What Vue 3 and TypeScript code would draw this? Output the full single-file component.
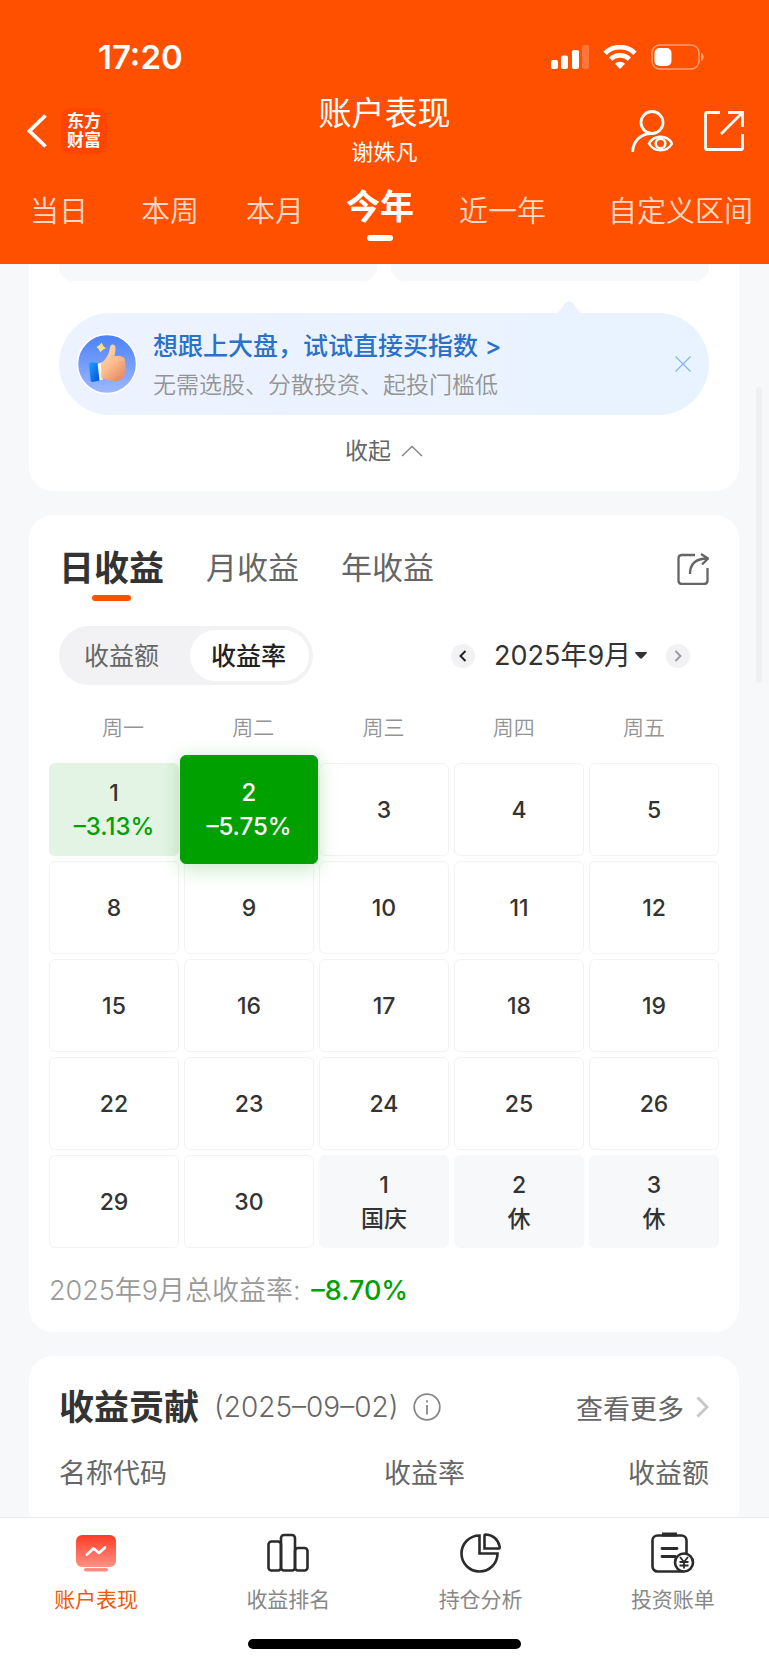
<script setup lang="ts">
import { ref } from 'vue'

interface Day {
  key: string
  label: string
  note?: string
  kind: 'plain' | 'loss' | 'selected' | 'rest'
}

const ranges: string[] = ['当日', '本周', '本月', '今年', '近一年', '自定义区间']
const activeRange = ref('今年')

const periods: string[] = ['日收益', '月收益', '年收益']
const activePeriod = ref('日收益')

const modes: string[] = ['收益额', '收益率']
const activeMode = ref('收益率')

const month = ref('2025年9月')
const weekdays: string[] = ['周一', '周二', '周三', '周四', '周五']

const plain = (n: number): Day => ({ key: `9-${n}`, label: String(n), kind: 'plain' })

const days: Day[] = [
  { key: '9-1', label: '1', note: '–3.13%', kind: 'loss' },
  { key: '9-2', label: '2', note: '–5.75%', kind: 'selected' },
  ...[3, 4, 5, 8, 9, 10, 11, 12, 15, 16, 17, 18, 19, 22, 23, 24, 25, 26, 29, 30].map(plain),
  { key: '10-1', label: '1', note: '国庆', kind: 'rest' },
  { key: '10-2', label: '2', note: '休', kind: 'rest' },
  { key: '10-3', label: '3', note: '休', kind: 'rest' },
]

const navItems: string[] = ['账户表现', '收益排名', '持仓分析', '投资账单']
const activeNav = ref('账户表现')
</script>

<template>
  <div class="app">
    <header class="header">
      <div class="status">
        <span class="clock">17:20</span>
        <div class="status-icons">
          <svg width="38" height="24" viewBox="0 0 38 24" fill="#fff">
            <rect x="0" y="15" width="7" height="9" rx="2" />
            <rect x="10" y="10.500" width="7" height="13.500" rx="2" />
            <rect x="21" y="5" width="7" height="19" rx="2" />
            <rect x="31" y="0" width="7" height="24" rx="2" opacity=".22" />
          </svg>
          <svg width="34" height="24" viewBox="0 0 34 24" fill="none" stroke="#fff">
            <path d="M2 8.300 A21.500 21.500 0 0 1 32 8.300" stroke-width="4.800" />
            <path d="M7.600 14.200 A13.500 13.500 0 0 1 26.400 14.200" stroke-width="4.600" />
            <path d="M17 24 L11.900 18.800 A7.300 7.300 0 0 1 22.100 18.800Z" fill="#fff" stroke="none" />
          </svg>
          <svg width="54" height="26" viewBox="0 0 54 26">
            <rect x="1" y="1" width="47" height="24" rx="8" fill="none" stroke="#fff" stroke-opacity=".45" stroke-width="1.500" />
            <rect x="3.500" y="4" width="17" height="18" rx="5" fill="#fff" />
            <path d="M50 9 C53.500 10 53.500 16 50 17Z" fill="#fff" fill-opacity=".5" />
          </svg>
        </div>
      </div>

      <div class="navbar">
        <div class="nav-left">
          <button class="icon-btn" aria-label="返回">
            <svg width="20" height="34" viewBox="0 0 20 34" fill="none" stroke="#fff" stroke-width="3.800">
              <path d="M18.500 1.500 L2.500 17 L18.500 32.500" />
            </svg>
          </button>
          <div class="brand"><span>东方</span><span>财富</span></div>
        </div>
        <div class="nav-title">
          <h1>账户表现</h1>
          <p>谢姝凡</p>
        </div>
        <div class="nav-right">
          <button class="icon-btn" aria-label="查看账户">
            <svg width="42" height="42" viewBox="0 0 42 42" fill="none" stroke="#fff" stroke-width="2.800">
              <circle cx="21" cy="12.500" r="11" />
              <path d="M1.600 42 C2 31.500 9.500 23.500 20.500 23.500" />
              <path d="M18 33.500 C23 24.500 36 24.500 41 33.500 C36 42.500 23 42.500 18 33.500Z" stroke-width="2.500" />
              <circle cx="29.500" cy="33.500" r="4.800" stroke-width="2.500" />
            </svg>
          </button>
          <button class="icon-btn" aria-label="分享">
            <svg width="40" height="40" viewBox="0 0 40 40" fill="none" stroke="#fff" stroke-width="2.800">
              <path d="M16 1.500 H3 Q1.500 1.500 1.500 3 V37 Q1.500 38.500 3 38.500 H37 Q38.500 38.500 38.500 37 V23" />
              <path d="M24 1.500 H38.500 V16 M38 2 L17 23" />
            </svg>
          </button>
        </div>
      </div>

      <nav class="ranges">
        <button
          v-for="item in ranges"
          :key="item"
          class="range"
          :class="{ active: item === activeRange }"
          @click="activeRange = item"
        >{{ item }}</button>
      </nav>
    </header>

    <main class="content">
      <div class="scrollbar"></div>

      <section class="card card-top">
        <div class="tiles">
          <div class="tile"></div>
          <div class="tile"></div>
        </div>
        <div class="promo">
          <svg class="promo-tip" width="26" height="14" viewBox="0 0 26 14">
            <path d="M0 14 C5 11 8 1 13 1 C18 1 21 11 26 14Z" fill="#ebf2ff" />
          </svg>
          <svg class="promo-icon" width="60" height="60" viewBox="0 0 60 60">
            <defs>
              <linearGradient id="disc" x1="0" y1="0" x2="0" y2="1">
                <stop offset="0" stop-color="#4a80f7" />
                <stop offset="1" stop-color="#9dbaff" />
              </linearGradient>
              <linearGradient id="skin" x1="0" y1="0" x2="0.600" y2="1">
                <stop offset="0" stop-color="#ffdcb4" />
                <stop offset=".6" stop-color="#fbbd8d" />
                <stop offset="1" stop-color="#e98f68" />
              </linearGradient>
              <linearGradient id="cuff" x1="0" y1="0" x2="1" y2="1">
                <stop offset="0" stop-color="#1fa2ff" />
                <stop offset="1" stop-color="#0450d8" />
              </linearGradient>
            </defs>
            <circle cx="30" cy="30" r="29.500" fill="url(#disc)" stroke="#fff" stroke-width="1.500" />
            <path d="M24.500 8.500 Q25.500 12 29 14.500 Q25.500 15 23.500 18.500 Q22.500 15 19.500 13 Q23 12 24.500 8.500Z" fill="#ffe27a" />
            <path d="M20 30 L26 28 L26 45.500 L21 46.500Z" fill="#f2f6ff" />
            <path d="M24 29 C29 26 32 20 33 13.500 C33.500 9.500 38 9.500 38.500 13.500 C39 17 37.500 20 37.500 22 C41 22 47.500 21.500 48 26 C49 31 48.500 37 47.500 41 C46 47 40 47.500 36 47 C31 46.500 28 45 24.500 44.500Z" fill="url(#skin)" />
            <path d="M41 28.500 Q45 28 48 29 M41.500 34.500 Q45 34 48.300 35 M41 40.500 Q45 40 47.500 41" fill="none" stroke="#ee9f74" stroke-width=".8" />
            <path d="M12 30.500 Q12 28.500 14 28.300 L20.500 29 L22.500 46.500 L15.500 48 Q14 48 13.700 46.500Z" fill="url(#cuff)" />
          </svg>
          <div class="promo-text">
            <a href="#" class="promo-link">想跟上大盘，试试直接买指数 &gt;</a>
            <p>无需选股、分散投资、起投门槛低</p>
          </div>
          <button class="icon-btn" aria-label="关闭">
            <svg width="16" height="16" viewBox="0 0 16 16" fill="none" stroke="#86b2e4" stroke-width="1.100">
              <path d="M.5 .5 L15.500 15.500 M15.500 .5 L.5 15.500" />
            </svg>
          </button>
        </div>
        <button class="collapse">
          收起
          <svg width="22" height="12" viewBox="0 0 22 12" fill="none" stroke="#888" stroke-width="1.600">
            <path d="M1 11 L11 1.500 L21 11" />
          </svg>
        </button>
      </section>

      <section class="card calendar">
        <div class="periods">
          <button
            v-for="item in periods"
            :key="item"
            class="period"
            :class="{ active: item === activePeriod }"
            @click="activePeriod = item"
          >{{ item }}</button>
          <button class="icon-btn share" aria-label="分享收益">
            <svg width="32" height="32" viewBox="0 0 32 32" fill="none" stroke="#666" stroke-width="2.300">
              <path d="M18 2 H5 Q1.500 2 1.500 5.500 V27.500 Q1.500 31 5 31 H27 Q30.500 31 30.500 27.500 V15" />
              <path d="M13 21 C13 11 19 5.500 30.500 5.500 M24 1 L31 5.500 L25 11.500" />
            </svg>
          </button>
        </div>

        <div class="controls">
          <div class="switch">
            <button
              v-for="item in modes"
              :key="item"
              class="mode"
              :class="{ active: item === activeMode }"
              @click="activeMode = item"
            >{{ item }}</button>
          </div>
          <div class="month">
            <button class="step" aria-label="上个月">
              <svg width="8" height="12" viewBox="0 0 8 12" fill="none" stroke="#222" stroke-width="2">
                <path d="M6.500 1 L1.500 6 L6.500 11" />
              </svg>
            </button>
            <label class="month-pick">
              <select v-model="month" aria-label="月份">
                <option>2025年8月</option>
                <option>2025年9月</option>
              </select>
              <svg width="12" height="7" viewBox="0 0 12 7" fill="#333">
                <path d="M1 0 H11 Q12.500 .5 11.500 1.500 L7 6.300 Q6 7 5 6.300 L.5 1.500 Q-.5 .5 1 0Z" />
              </svg>
            </label>
            <button class="step" aria-label="下个月">
              <svg width="8" height="12" viewBox="0 0 8 12" fill="none" stroke="#999" stroke-width="1.800">
                <path d="M1.500 1 L6.500 6 L1.500 11" />
              </svg>
            </button>
          </div>
        </div>

        <div class="weekdays">
          <span v-for="d in weekdays" :key="d">{{ d }}</span>
        </div>

        <div class="days">
          <button v-for="day in days" :key="day.key" class="day" :class="day.kind">
            <span>{{ day.label }}</span>
            <span v-if="day.note" class="note">{{ day.note }}</span>
          </button>
        </div>

        <p class="total">2025年9月总收益率: <strong>–8.70%</strong></p>
      </section>

      <section class="card contribution">
        <div class="contribution-head">
          <h2>收益贡献</h2>
          <span class="date">(2025–09–02)</span>
          <button class="icon-btn" aria-label="说明">
            <svg width="28" height="28" viewBox="0 0 28 28" fill="none" stroke="#888" stroke-width="1.800">
              <circle cx="14" cy="14" r="12.800" />
              <path d="M14 12 V21.500 M14 7.300 V9.500" />
            </svg>
          </button>
          <a href="#" class="more">
            查看更多
            <svg width="13" height="22" viewBox="0 0 13 22" fill="none" stroke="#c8c8c8" stroke-width="3">
              <path d="M1.500 1.500 L11 11 L1.500 20.500" />
            </svg>
          </a>
        </div>
        <table>
          <thead>
            <tr>
              <th>名称代码</th>
              <th>收益率</th>
              <th>收益额</th>
            </tr>
          </thead>
        </table>
      </section>
    </main>

    <footer class="footer">
      <nav class="tabbar">
        <button
          v-for="(item, i) in navItems"
          :key="item"
          class="tab"
          :class="{ active: item === activeNav }"
          @click="activeNav = item"
        >
          <svg v-if="i === 0" width="44" height="44" viewBox="0 0 44 44" fill="none">
            <defs>
              <linearGradient id="screen" x1="0" y1="0" x2="0" y2="1">
                <stop offset="0" stop-color="#ff3c26" />
                <stop offset="1" stop-color="#ff9184" />
              </linearGradient>
            </defs>
            <rect x="2" y="4" width="40" height="32" rx="6" fill="url(#screen)" />
            <rect x="10" y="37" width="24" height="3.500" rx="1.700" fill="#ff8c80" />
            <path d="M13 23.500 L19.500 17.500 L25 22 L31 16.500" stroke="#fff" stroke-width="2.800" stroke-linecap="round" stroke-linejoin="round" />
          </svg>
          <svg v-else-if="i === 1" width="44" height="44" viewBox="0 0 44 44" fill="none" stroke="#2b2b2b" stroke-width="2.600">
            <rect x="2.500" y="10.500" width="12.500" height="29" rx="3" />
            <rect x="15" y="4" width="14" height="35.500" rx="3" />
            <rect x="29" y="17" width="12.500" height="22.500" rx="3" />
          </svg>
          <svg v-else-if="i === 2" width="44" height="44" viewBox="0 0 44 44" fill="none" stroke="#2b2b2b" stroke-width="2.600">
            <path d="M20.500 4.500 A18 18 0 1 0 38.500 22.500 L20.500 22.500Z" />
            <path d="M26.500 3.500 Q25.500 3.500 25.500 4.500 V17.500 H40 Q41 17.500 40.500 15 C39 8.500 33.500 3.500 26.500 3.500Z" />
          </svg>
          <svg v-else width="44" height="44" viewBox="0 0 44 44" fill="none" stroke="#2b2b2b" stroke-width="2.600">
            <rect x="1.500" y="4.500" width="34" height="36" rx="5" />
            <path d="M11 3.500 H26" stroke-width="4" />
            <path d="M11 17.500 H26 M11 25.500 H24" stroke-width="2.800" stroke-linecap="round" />
            <circle cx="33" cy="31.500" r="9" fill="#fff" />
            <path d="M29 26 L33 31 L37 26 M33 31 V37.500 M28.500 31 H37.500 M28.500 34.500 H37.500" stroke-width="1.800" />
          </svg>
          <span>{{ item }}</span>
        </button>
      </nav>
      <div class="home-indicator"></div>
    </footer>
  </div>
</template>

<style>
body {
  margin: 0;
  background: #f7f8fa;
}
</style>

<style scoped>
.app {
  display: flex;
  flex-direction: column;
  height: 100vh;
  font-family: Inter, 'Noto Sans CJK SC', sans-serif;
  color: #333;
  background: #f7f8fa;
}

h1,
h2,
p {
  margin: 0;
  font-weight: 400;
}

button,
select {
  margin: 0;
  padding: 0;
  border: 0;
  background: none;
  font: inherit;
  color: inherit;
  cursor: pointer;
}

a {
  color: inherit;
  text-decoration: none;
}

svg {
  display: block;
}

.icon-btn {
  display: flex;
}

/* Header */
.header {
  flex: none;
  background: #ff5000;
  color: #fff;
}

.status {
  display: flex;
  align-items: center;
  justify-content: space-between;
  height: 70px;
  padding: 22px 64px 0 98px;
}

.clock {
  font-size: 33px;
  font-weight: 600;
  line-height: 40px;
}

.status-icons {
  display: flex;
  align-items: center;
  gap: 14px;
}

.navbar {
  display: grid;
  grid-template-columns: 1fr auto 1fr;
  align-items: center;
  height: 76px;
  padding: 0 25px;
}

.nav-left {
  display: flex;
  align-items: center;
  gap: 14px;
  padding-left: 2px;
}

.brand {
  display: flex;
  flex-direction: column;
  align-items: center;
  justify-content: center;
  width: 46px;
  height: 46px;
  border-radius: 9px;
  background: #ff4500;
  font-size: 17px;
  font-weight: 700;
  line-height: 19px;
}

.nav-title {
  text-align: center;
}

.nav-title h1 {
  font-size: 33px;
  line-height: 42px;
}

.nav-title p {
  font-size: 22px;
  line-height: 36px;
}

.nav-right {
  display: flex;
  align-items: center;
  justify-content: flex-end;
  gap: 31px;
}

.ranges {
  display: grid;
  grid-template-columns: 118fr 104fr 106fr 104fr 141fr 196fr;
  align-items: start;
  height: 74px;
  padding-top: 22px;
}

.range {
  font-size: 29px;
  font-weight: 350;
  line-height: 44px;
  color: rgba(255, 255, 255, 0.8);
  white-space: nowrap;
}

.range:last-child {
  padding-right: 16px;
  text-align: right;
}

.range.active {
  font-size: 34px;
  font-weight: 700;
  line-height: 34px;
  color: #fff;
}

.range.active::after {
  content: '';
  display: block;
  width: 26px;
  height: 6px;
  margin: 11px auto 0;
  border-radius: 3px;
  background: #fff;
}

/* Scrolling content */
.content {
  position: relative;
  flex: 1;
  min-height: 0;
  overflow: hidden;
  padding: 0 30px 0 29px;
}

.scrollbar {
  position: absolute;
  top: 123px;
  right: 7px;
  width: 6px;
  height: 296px;
  border-radius: 3px;
  background: #eef0f2;
}

.card {
  margin-bottom: 24px;
  border-radius: 24px;
  background: #fff;
}

.card-top {
  padding: 0 30px;
  border-radius: 0 0 24px 24px;
}

.tiles {
  display: grid;
  grid-template-columns: 1fr 1fr;
  gap: 14px;
}

.tile {
  height: 17px;
  border-radius: 0 0 14px 14px;
  background: #f7f8fa;
}

.promo {
  position: relative;
  display: flex;
  align-items: center;
  height: 102px;
  margin-top: 32px;
  padding: 0 18px;
  border-radius: 51px;
  background: linear-gradient(90deg, #edf2ff, #e8f3ff);
}

.promo-tip {
  position: absolute;
  top: -13px;
  right: 127px;
}

.promo-icon {
  flex: none;
}

.promo-text {
  flex: 1;
  margin-left: 16px;
  padding-top: 2px;
}

.promo-link {
  display: block;
  font-size: 25px;
  font-weight: 500;
  line-height: 40px;
  color: #2b71c7;
}

.promo-text p {
  font-size: 23px;
  font-weight: 350;
  line-height: 38px;
  color: #949494;
}

.collapse {
  display: flex;
  align-items: center;
  justify-content: center;
  gap: 10px;
  width: 100%;
  height: 76px;
  padding-bottom: 4px;
  font-size: 23px;
  line-height: 34px;
  color: #666;
}

/* Calendar card */
.calendar {
  padding: 30px 20px 21px;
}

.periods {
  display: flex;
  align-items: flex-start;
  gap: 42px;
  height: 81px;
  padding: 0 10px;
}

.period {
  font-size: 31px;
  line-height: 46px;
  color: #666;
}

.period.active {
  font-size: 35px;
  font-weight: 700;
  color: #333;
}

.period.active::after {
  content: '';
  display: block;
  width: 39px;
  height: 6px;
  margin: 4px auto 0;
  border-radius: 3px;
  background: #ff5000;
}

.share {
  margin: 8px 0 0 auto;
}

.controls {
  display: flex;
  align-items: center;
  justify-content: space-between;
  padding: 0 29px 0 10px;
}

.switch {
  display: flex;
  justify-content: space-between;
  box-sizing: border-box;
  width: 254px;
  height: 59px;
  padding: 4px;
  border-radius: 30px;
  background: #f2f2f4;
}

.mode {
  width: 119px;
  padding: 0 2px 4px 0;
  border-radius: 26px;
  font-size: 25px;
  color: #666;
}

.mode.active {
  background: #fff;
  font-weight: 500;
  color: #222;
}

.month {
  display: flex;
  align-items: center;
}

.step {
  display: flex;
  align-items: center;
  justify-content: center;
  width: 24px;
  height: 24px;
  border-radius: 50%;
  background: #f2f2f4;
}

.month-pick {
  display: flex;
  align-items: center;
  gap: 3px;
  margin: 0 19px;
}

.month-pick select {
  appearance: none;
  font-size: 27px;
  line-height: 38px;
  color: #333;
}

.month-pick svg {
  pointer-events: none;
}

.weekdays {
  display: grid;
  grid-template-columns: repeat(5, 1fr);
  padding: 25px 10px 18px 9px;
  font-size: 21px;
  font-weight: 350;
  line-height: 35px;
  text-align: center;
  color: #949494;
}

.days {
  display: grid;
  grid-template-columns: repeat(5, 1fr);
  grid-auto-rows: 93px;
  gap: 5px;
}

.day {
  display: flex;
  flex-direction: column;
  align-items: center;
  justify-content: center;
  box-sizing: border-box;
  border: 1px solid #f3f3f5;
  border-radius: 6px;
  background: #fff;
  font-size: 23px;
  font-weight: 500;
  line-height: 34px;
}

.day.loss {
  border-color: #e3f4e4;
  background: #e3f4e4;
}

.day.loss .note {
  font-size: 24px;
  color: #00a000;
}

.day.selected {
  z-index: 1;
  margin: -8px -4px;
  border-color: #00a000;
  background: #00a000;
  color: #fff;
  font-size: 24px;
  box-shadow: 0 4px 20px rgba(0, 160, 0, 0.25);
}

.day.rest {
  border-color: #f7f8fa;
  background: #f7f8fa;
}

.total {
  margin-top: 23px;
  font-size: 27px;
  font-weight: 350;
  line-height: 40px;
  color: #999;
}

.total strong {
  margin-left: 3px;
  font-weight: 500;
  color: #00a000;
}

/* Contribution card */
.contribution {
  padding: 28px 30px 40px;
}

.contribution-head {
  display: flex;
  align-items: center;
  height: 46px;
}

.contribution-head h2 {
  font-size: 35px;
  font-weight: 700;
  line-height: 46px;
}

.date {
  margin: 0 15px;
  font-size: 28px;
  font-weight: 350;
  color: #666;
}

.more {
  display: flex;
  align-items: center;
  gap: 12px;
  margin-left: auto;
  font-size: 27px;
  color: #666;
}

table {
  width: 100%;
  margin-top: 24px;
  border-collapse: collapse;
  table-layout: fixed;
}

th {
  width: 25%;
  padding: 0;
  font-size: 27px;
  font-weight: 400;
  line-height: 40px;
  text-align: left;
  color: #666;
}

th:first-child {
  width: 50%;
}

th:last-child {
  text-align: right;
}

/* Bottom bar */
.footer {
  flex: none;
  height: 147px;
  border-top: 1px solid #ebecee;
  background: #fff;
}

.tabbar {
  display: grid;
  grid-template-columns: repeat(4, 1fr);
  padding-top: 13px;
}

.tab {
  display: flex;
  flex-direction: column;
  align-items: center;
  gap: 9px;
  font-size: 21px;
  line-height: 32px;
  color: #888;
}

.tab.active {
  color: #f25a0a;
}

.home-indicator {
  width: 273px;
  height: 10px;
  margin: 23px auto 0;
  border-radius: 5px;
  background: #000;
}
</style>
